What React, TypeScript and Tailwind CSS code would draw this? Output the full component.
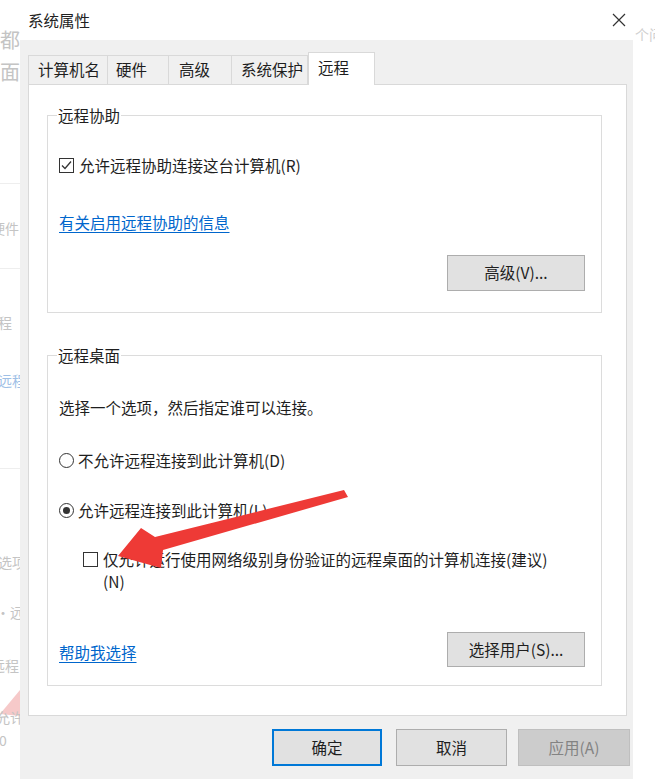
import React from "react";

const font = { fontFamily: '"Noto Sans CJK SC", "Noto Sans", sans-serif' };

function CheckBox({ checked }: { checked?: boolean }) {
  return (
    <span className="w-[15px] h-[15px] border border-[#333] bg-white flex items-center justify-center shrink-0">
      {checked && (
        <svg width="13" height="13" viewBox="0 0 13 13">
          <path d="M2 6.5 L5 9.5 L11 2.5" fill="none" stroke="#333" strokeWidth="1.3" />
        </svg>
      )}
    </span>
  );
}

function Radio({ checked }: { checked?: boolean }) {
  return (
    <span className="w-[15px] h-[15px] rounded-full border border-[#333] bg-white flex items-center justify-center shrink-0">
      {checked && <span className="w-[7px] h-[7px] rounded-full bg-[#333]" />}
    </span>
  );
}

function Btn({ children, w = "w-[138px]", h = "h-[36px]" }: { children: React.ReactNode; w?: string; h?: string }) {
  return (
    <div className={`${w} ${h} bg-[#e1e1e1] border border-[#adadad] flex items-center justify-center text-[#1e1e1e] whitespace-nowrap`}>
      {children}
    </div>
  );
}

export default function App() {
  return (
    <div
      className="relative w-[655px] h-[779px] overflow-hidden bg-white flex text-[15.5px] text-[#1e1e1e]"
      style={font}
    >
      {/* faint page behind, left */}
      <div className="relative w-[20px] h-full overflow-hidden bg-white text-[#c4c4c4]">
        <span className="absolute left-0 top-[27px] text-[20px] leading-[26px]">都</span>
        <span className="absolute left-0 top-[59px] text-[20px] leading-[26px]">面</span>
        <span className="absolute left-0 top-[183px] w-[20px] h-px bg-[#eeeeee]" />
        <span className="absolute left-[-9px] top-[218px] text-[14px] leading-[20px] whitespace-nowrap">硬件</span>
        <span className="absolute left-0 top-[268px] w-[20px] h-px bg-[#eeeeee]" />
        <span className="absolute left-[-16px] top-[312px] text-[14px] leading-[20px] whitespace-nowrap">远程</span>
        <span className="absolute left-[-2px] top-[370px] text-[14px] leading-[20px] whitespace-nowrap text-[#9ec0e6]">远程</span>
        <span className="absolute left-0 top-[468px] w-[20px] h-px bg-[#eeeeee]" />
        <span className="absolute left-[-2px] top-[552px] text-[14px] leading-[20px] whitespace-nowrap">选项</span>
        <span className="absolute left-[-4px] top-[602px] text-[14px] leading-[20px] whitespace-nowrap">·远程</span>
        <span className="absolute left-[-9px] top-[655px] text-[14px] leading-[20px] whitespace-nowrap">远程</span>
        <svg className="absolute left-0 top-[686px]" width="20" height="30" viewBox="0 0 20 30">
          <polygon points="0,28 20,4 20,30" fill="#f6c9c9" />
        </svg>
        <span className="absolute left-[-4px] top-[707px] text-[14px] leading-[20px] whitespace-nowrap">允许</span>
        <span className="absolute left-[-1px] top-[730px] text-[14px] leading-[20px]">0</span>
      </div>

      {/* dialog */}
      <div className="w-[613px] h-full flex flex-col">
        <div className="h-[40px] bg-white flex items-center justify-between pl-[8px] pr-[6px]">
          <span className="text-[#222] leading-[20px]">系统属性</span>
          <svg width="14" height="14" viewBox="0 0 14 14" className="mr-[1px]">
            <path d="M1 1 L13 13 M13 1 L1 13" stroke="#333" strokeWidth="1.2" />
          </svg>
        </div>
        <div className="flex-1 bg-[#f0f0f0] pl-[8px] pt-[13px] flex flex-col">
          {/* tabs */}
          <div className="flex items-end h-[31px] whitespace-nowrap">
            <div className="w-[79px] h-[29px] pl-[9px] flex items-center border-t border-l border-[#d9d9d9] bg-[#f0f0f0]">计算机名</div>
            <div className="w-[61px] h-[29px] pl-[8px] flex items-center border-t border-l border-[#d9d9d9] bg-[#f0f0f0]">硬件</div>
            <div className="w-[63px] h-[29px] pl-[10px] flex items-center border-t border-l border-[#d9d9d9] bg-[#f0f0f0]">高级</div>
            <div className="w-[77px] h-[29px] pl-[9px] flex items-center border-t border-l border-r border-[#d9d9d9] bg-[#f0f0f0]">系统保护</div>
            <div className="relative z-10 w-[67px] h-[33px] mb-[-1px] pl-[9px] pb-[2px] flex items-center border-t border-l border-r border-[#d9d9d9] bg-white">远程</div>
          </div>

          {/* panel */}
          <div className="w-[599px] h-[632px] border border-[#d9d9d9] bg-white pl-[18px] pt-[30px] flex flex-col">
            {/* group 1 */}
            <div className="w-[555px] border border-[#dcdcdc] flex flex-col pl-[11px]">
              <span className="-mt-[11px] -ml-[2px] self-start bg-white px-[1px] leading-[20px]">远程协助</span>
              <div className="mt-[30px] flex items-center gap-[5px] leading-[20px]">
                <CheckBox checked />
                <span>允许远程协助连接这台计算机(R)</span>
              </div>
              <span className="mt-[37px] leading-[20px] self-start text-[#0066cc] underline underline-offset-[3px]">有关启用远程协助的信息</span>
              <div className="mt-[23px] mb-[21px] self-end mr-[16px]">
                <Btn>高级(V)...</Btn>
              </div>
            </div>

            {/* group 2 */}
            <div className="mt-[42px] w-[555px] border border-[#dcdcdc] flex flex-col pl-[11px]">
              <span className="-mt-[11px] -ml-[2px] self-start bg-white px-[1px] leading-[20px]">远程桌面</span>
              <span className="mt-[32px] leading-[20px]">选择一个选项，然后指定谁可以连接。</span>
              <div className="mt-[33px] flex items-center gap-[4px] leading-[20px]">
                <Radio />
                <span>不允许远程连接到此计算机(D)</span>
              </div>
              <div className="mt-[30px] flex items-center gap-[4px] leading-[20px]">
                <Radio checked />
                <span>允许远程连接到此计算机(L)</span>
              </div>
              <div className="mt-[28px] ml-[24px] flex items-start gap-[5px] leading-[22px]">
                <span className="mt-[4px]">
                  <CheckBox />
                </span>
                <span>
                  仅允许运行使用网络级别身份验证的远程桌面的计算机连接(建议)
                  <br />
                  (N)
                </span>
              </div>
              <div className="mt-[40px] mb-[18px] flex items-center justify-between mr-[16px]">
                <span className="mt-[5px] leading-[20px] text-[#0066cc] underline underline-offset-[3px]">帮助我选择</span>
                <Btn h="h-[35px]">选择用户(S)...</Btn>
              </div>
            </div>
          </div>

          {/* bottom buttons */}
          <div className="mt-[13px] flex justify-end pr-[3px]">
            <div className="w-[110px] h-[37px] border-2 border-[#0078d7] bg-[#e1e1e1] flex items-center justify-center">确定</div>
            <div className="ml-[14px]">
              <Btn w="w-[111px]" h="h-[37px]">取消</Btn>
            </div>
            <div className="ml-[11px] w-[112px] h-[37px] border border-[#bfbfbf] bg-[#cccccc] text-[#838383] flex items-center justify-center">应用(A)</div>
          </div>
        </div>
      </div>

      {/* faint page behind, right */}
      <div className="relative flex-1 h-full overflow-hidden bg-white text-[#cfcfcf]">
        <span className="absolute left-[2px] top-[24px] text-[14px] leading-[20px] whitespace-nowrap">个问</span>
      </div>

      {/* red annotation arrow */}
      <svg className="absolute left-0 top-0 pointer-events-none" width="655" height="779" viewBox="0 0 655 779">
        <polygon
          points="344,490 348,497 163,550 161,568 118,556 141,528 155,537"
          fill="#ee3a36"
        />
      </svg>
    </div>
  );
}
